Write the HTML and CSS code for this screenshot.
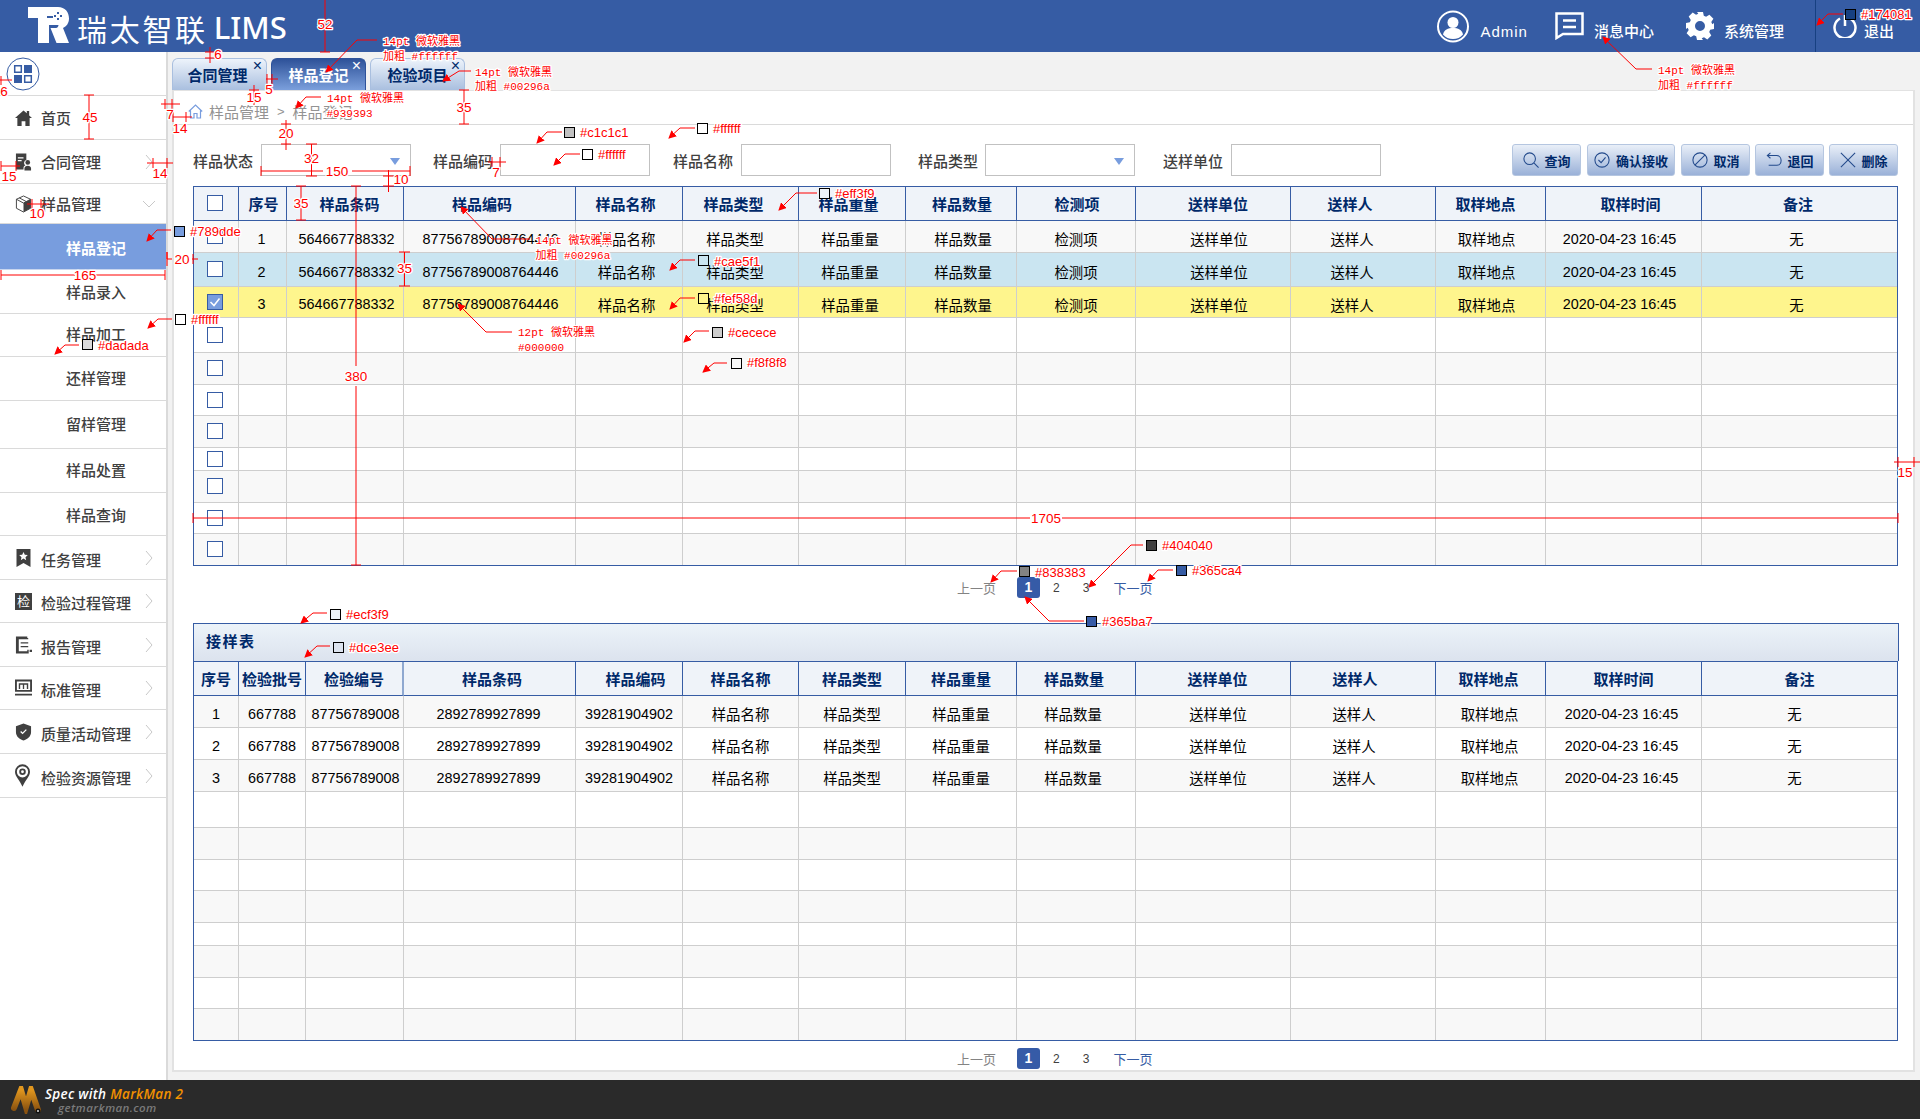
FILE: index.html
```html
<!DOCTYPE html>
<html lang="zh-CN">
<head>
    <meta charset="UTF-8">
    <title>瑞太智联 LIMS</title>
    <link rel="stylesheet" href="styles.css">
</head>
<body>
    <header class="topbar">
        <svg class="logo" viewBox="0 0 41 36">
            <path fill="#fff" d="M0 0H30C37 0 41 5 41 11.500C41 16 38.500 19.500 35 21L41 36H28.500L22.500 21H28C29.500 21 30.500 19.500 30.500 18H21V36H10V11H0Z"/>
            <path fill="#365ca4" d="M25 11H19V9H25ZM29 5h2v2h-2ZM32 8h2v2h-2ZM29 11h2v2h-2ZM26 8h2v2h-2Z"/>
        </svg>
        <span class="brand">瑞太智联</span>
        <span class="brand-lims">LIMS</span>
        <div class="top-right">
            <svg class="top-icon avatar" viewBox="0 0 32 32"><circle cx="16" cy="16" r="15" fill="none" stroke="#fff" stroke-width="2"/><circle cx="16" cy="12" r="5.500" fill="#fff"/><path fill="#fff" d="M6 24c1-5 5-6.500 10-6.500s9 1.500 10 6.500c-2.500 3-6 4.500-10 4.500S8.500 27 6 24Z"/></svg>
            <span class="top-text admin">Admin</span>
            <svg class="top-icon msg" viewBox="0 0 29 28"><path fill="none" stroke="#fff" stroke-width="2.500" d="M1.500 1.500H27.500V22H8L1.500 26Z"/><path stroke="#fff" stroke-width="2.500" d="M8 8.500H21M8 15H21"/></svg>
            <span class="top-text msg-text">消息中心</span>
            <svg class="top-icon gear" viewBox="0 0 28 28"><path fill="#fff" fill-rule="evenodd" d="M11 0h6l.8 3.800 2.300 1 3.300-2.100 4 4-2.100 3.300 1 2.300L28 11v6l-3.800.8-1 2.300 2.100 3.300-4 4-3.300-2.100-2.300 1L17 28h-6l-.8-3.800-2.300-1-3.300 2.100-4-4 2.100-3.300-1-2.300L0 17v-6l3.800-.8 1-2.300-2.100-3.300 4-4 3.300 2.100 2.300-1ZM14 9a5 5 0 1 0 0 10 5 5 0 0 0 0-10Z"/></svg>
            <span class="top-text sys-text">系统管理</span>
            <div class="logout">
                <svg class="top-icon power" viewBox="0 0 24 24"><path fill="none" stroke="#fff" stroke-width="2.500" d="M7 4.500a10.500 10.500 0 1 0 10 0M12 1V12"/></svg>
                <span class="top-text">退出</span>
            </div>
        </div>
    </header>

    <div class="layout">
        <nav class="sidebar">
            <div class="nav-item nav-home h44">
                <svg class="home-grid" viewBox="0 0 34 34">
                    <circle cx="17" cy="17" r="16" fill="none" stroke="#365ca4"/>
                    <path fill="none" stroke="#365ca4" stroke-width="1.500" d="M8.700 8.700h6.600v6.600H8.700Z"/>
                    <path fill="#365ca4" d="M18 8h8v8h-8ZM8 18h8v8H8Z"/>
                    <path fill="none" stroke="#365ca4" stroke-width="1.500" d="M18.700 18.700h6.600v6.600h-6.600Z"/>
                </svg>
            </div>
            <a class="nav-item top-group h44">
                <svg class="nav-icon" viewBox="0 0 18 18"><path d="M9 1 0 9h2.500v8.500h4.500v-5h4v5h4.500V9H18l-3-2.700V1.500h-2.500v2.600Z"/></svg>
                <span class="nav-label">首页</span>
            </a>
            <a class="nav-item top-group h44">
                <svg class="nav-icon" viewBox="0 0 18 18"><path d="M1 0h11v7a3 3 0 0 0-1 5.500c-1 .5-2 1.500-2 3V17H1Z"/><path fill="#fff" d="M3 4h6v1.300H3ZM3 7h4v1.300H3Z"/><circle cx="13.500" cy="9.500" r="2.500"/><path d="M10 18v-2c0-2 1.500-3 3.500-3s3.500 1 3.500 3v2Z"/></svg>
                <span class="nav-label">合同管理</span>
                <svg class="chev" viewBox="0 0 8 16"><polyline points="1,1 7,8 1,15"/></svg>
            </a>
            <a class="nav-item top-group h40">
                <svg class="nav-icon" viewBox="0 0 18 19"><path fill="none" stroke="#404040" d="M9 1 16.500 4.500V14L9 18 1.500 14V4.500Z"/><path fill="none" stroke="#404040" d="M1.500 4.500 9 8.500 16.500 4.500M4.500 3 12 7"/><path d="M9 8.500 16.500 4.500V14L9 18Z"/></svg>
                <span class="nav-label">样品管理</span>
                <svg class="chev-down" viewBox="0 0 14 8"><polyline points="1,1 7,7 13,1"/></svg>
            </a>
            <a class="nav-item sub active h46"><span class="nav-label">样品登记</span></a>
            <a class="nav-item sub mid h44"><span class="nav-label">样品录入</span></a>
            <a class="nav-item sub h43"><span class="nav-label">样品加工</span></a>
            <a class="nav-item sub h44"><span class="nav-label">还样管理</span></a>
            <a class="nav-item sub h48"><span class="nav-label">留样管理</span></a>
            <a class="nav-item sub h44"><span class="nav-label">样品处置</span></a>
            <a class="nav-item sub mid h43"><span class="nav-label">样品查询</span></a>
            <a class="nav-item h44">
                <svg class="nav-icon" viewBox="0 0 16 18"><path fill-rule="evenodd" d="M1 0h14v18l-7-4-7 4ZM8 3 6.700 5.800l-3 .3L6 8.200l-.7 3L8 9.600l2.700 1.600-.7-3 2.300-2.100-3-.3Z"/></svg>
                <span class="nav-label">任务管理</span>
                <svg class="chev" viewBox="0 0 8 16"><polyline points="1,1 7,8 1,15"/></svg>
            </a>
            <a class="nav-item h43">
                <span class="icon-char">检</span>
                <span class="nav-label">检验过程管理</span>
                <svg class="chev" viewBox="0 0 8 16"><polyline points="1,1 7,8 1,15"/></svg>
            </a>
            <a class="nav-item h44">
                <svg class="nav-icon" viewBox="0 0 18 18"><path d="M1 0H13V1.500H14V3H4V15.500H13V14H14.500V18H1Z"/><path d="M6 6h8v1.500H6ZM6 10h8v1.500H6ZM15.500 14H18v2.500h-2.500Z"/></svg>
                <span class="nav-label">报告管理</span>
                <svg class="chev" viewBox="0 0 8 16"><polyline points="1,1 7,8 1,15"/></svg>
            </a>
            <a class="nav-item h43">
                <svg class="nav-icon" viewBox="0 0 18 18"><path fill-rule="evenodd" d="M0 0H18V13H0ZM2 2V11H16V2Z"/><path d="M4 4H14V10H12.500V5.500H9.700V10H8.300V5.500H5.500V10H4ZM0 15H18V17H0Z"/></svg>
                <span class="nav-label">标准管理</span>
                <svg class="chev" viewBox="0 0 8 16"><polyline points="1,1 7,8 1,15"/></svg>
            </a>
            <a class="nav-item h44">
                <svg class="nav-icon" viewBox="0 0 18 18"><path fill-rule="evenodd" d="M9 0 17 3V9C17 14 13 16.500 9 18 5 16.500 1 14 1 9V3ZM5.500 9 8 11.500 12.500 7 11.500 6 8 9.500 6.500 8Z"/></svg>
                <span class="nav-label">质量活动管理</span>
                <svg class="chev" viewBox="0 0 8 16"><polyline points="1,1 7,8 1,15"/></svg>
            </a>
            <a class="nav-item h44">
                <svg class="nav-icon tall" viewBox="0 0 16 24"><path fill-rule="evenodd" d="M8 0a8 8 0 0 1 8 8c0 5-5 9-8 16C5 17 0 13 0 8a8 8 0 0 1 8-8ZM8 2a6 6 0 1 0 0 12A6 6 0 0 0 8 2Z"/><path fill-rule="evenodd" d="M8 4.500a3.500 3.500 0 1 1 0 7 3.500 3.500 0 0 1 0-7ZM8 6.500a1.500 1.500 0 1 0 0 3 1.500 1.500 0 0 0 0-3Z"/></svg>
                <span class="nav-label">检验资源管理</span>
                <svg class="chev" viewBox="0 0 8 16"><polyline points="1,1 7,8 1,15"/></svg>
            </a>
        </nav>

        <main class="main">
            <div class="tabs">
                <div class="tab tab-first">合同管理<span class="tab-x">×</span></div>
                <div class="tab tab-on">样品登记<span class="tab-x">×</span></div>
                <div class="tab">检验项目<span class="tab-x">×</span></div>
            </div>
            <div class="panel">
                <div class="crumb">
                    <svg class="crumb-home" viewBox="0 0 15 15"><path fill="none" stroke="#789dde" stroke-width="1.200" d="M.8 7.500 7.500 1l6.700 6.500M2.500 6.500V14H6V9.500h3V14h3.500V6.500"/></svg>
                    <span>样品管理</span><span class="crumb-sep">&gt;</span><span>样品登记</span>
                </div>

                <div class="filters">
                    <label class="f-label">样品状态</label>
                    <div class="f-box f-select"><i class="caret"></i></div>
                    <label class="f-label gap22">样品编码</label>
                    <div class="f-box"></div>
                    <label class="f-label gap23">样品名称</label>
                    <div class="f-box"></div>
                    <label class="f-label gap27">样品类型</label>
                    <div class="f-box f-select"><i class="caret"></i></div>
                    <label class="f-label gap28">送样单位</label>
                    <div class="f-box"></div>
                    <div class="btns">
                        <button class="btn b69 wide"><svg viewBox="0 0 18 18"><circle cx="7.500" cy="7.500" r="6.500"/><path d="m12.500 12.500 5 5"/></svg>查询</button>
                        <button class="btn b88 wide"><svg viewBox="0 0 18 18"><circle cx="9" cy="9" r="8"/><path d="m5 9 3 3 5-6"/></svg>确认接收</button>
                        <button class="btn b69"><svg viewBox="0 0 18 18"><circle cx="9" cy="9" r="8"/><path d="M3.500 14.500l11-11"/></svg>取消</button>
                        <button class="btn b69"><svg viewBox="0 0 18 18"><path d="M5 1 1.500 4 5 7M1.500 4H12C15 4 17 6.500 17 9.500S15 15 12 15H3"/></svg>退回</button>
                        <button class="btn b69"><svg viewBox="0 0 18 18"><path d="m1 1 16 16M17 1 1 17"/></svg>删除</button>
                    </div>
                </div>

                <table class="grid grid-a">
                    <colgroup>
                        <col class="w45"><col class="w48"><col class="w117"><col class="w172"><col class="w107"><col class="w116"><col class="w107"><col class="w111"><col class="w119"><col class="w155"><col class="w145"><col class="w110"><col class="w156"><col class="w195">
                    </colgroup>
                    <thead>
                        <tr><th><i class="cb"></i></th><th>序号</th><th>样品条码</th><th>样品编码</th><th>样品名称</th><th>样品类型</th><th>样品重量</th><th>样品数量</th><th>检测项</th><th>送样单位</th><th>送样人</th><th>取样地点</th><th>取样时间</th><th>备注</th></tr>
                    </thead>
                    <tbody>
                        <tr class="h32 grey"><td><i class="cb"></i></td><td>1</td><td>564667788332</td><td>87756789008764446</td><td>样品名称</td><td>样品类型</td><td>样品重量</td><td>样品数量</td><td>检测项</td><td>送样单位</td><td>送样人</td><td>取样地点</td><td>2020-04-23 16:45</td><td>无</td></tr>
                        <tr class="h34 blue"><td><i class="cb"></i></td><td>2</td><td>564667788332</td><td>87756789008764446</td><td>样品名称</td><td>样品类型</td><td>样品重量</td><td>样品数量</td><td>检测项</td><td>送样单位</td><td>送样人</td><td>取样地点</td><td>2020-04-23 16:45</td><td>无</td></tr>
                        <tr class="h31 yellow"><td><i class="cb on"><svg viewBox="0 0 14 14"><path d="m2.500 7 3.500 3.500 5.500-7"/></svg></i></td><td>3</td><td>564667788332</td><td>87756789008764446</td><td>样品名称</td><td>样品类型</td><td>样品重量</td><td>样品数量</td><td>检测项</td><td>送样单位</td><td>送样人</td><td>取样地点</td><td>2020-04-23 16:45</td><td>无</td></tr>
                        <tr class="h35"><td><i class="cb"></i></td><td></td><td></td><td></td><td></td><td></td><td></td><td></td><td></td><td></td><td></td><td></td><td></td><td></td></tr>
                        <tr class="h32 grey"><td><i class="cb"></i></td><td></td><td></td><td></td><td></td><td></td><td></td><td></td><td></td><td></td><td></td><td></td><td></td><td></td></tr>
                        <tr class="h31"><td><i class="cb"></i></td><td></td><td></td><td></td><td></td><td></td><td></td><td></td><td></td><td></td><td></td><td></td><td></td><td></td></tr>
                        <tr class="h32 grey"><td><i class="cb"></i></td><td></td><td></td><td></td><td></td><td></td><td></td><td></td><td></td><td></td><td></td><td></td><td></td><td></td></tr>
                        <tr class="h23"><td><i class="cb"></i></td><td></td><td></td><td></td><td></td><td></td><td></td><td></td><td></td><td></td><td></td><td></td><td></td><td></td></tr>
                        <tr class="h32 grey"><td><i class="cb"></i></td><td></td><td></td><td></td><td></td><td></td><td></td><td></td><td></td><td></td><td></td><td></td><td></td><td></td></tr>
                        <tr class="h31"><td><i class="cb"></i></td><td></td><td></td><td></td><td></td><td></td><td></td><td></td><td></td><td></td><td></td><td></td><td></td><td></td></tr>
                        <tr class="h31 grey"><td><i class="cb"></i></td><td></td><td></td><td></td><td></td><td></td><td></td><td></td><td></td><td></td><td></td><td></td><td></td><td></td></tr>
                    </tbody>
                </table>

                <div class="pager pager-a">
                    <span class="pg-prev">上一页</span><span class="pg-on">1</span><span class="pg-num p2">2</span><span class="pg-num p3">3</span><span class="pg-next">下一页</span>
                </div>

                <div class="table-title">接样表</div>
                <table class="grid grid-b">
                    <colgroup>
                        <col class="w45"><col class="w67"><col class="w98"><col class="w172"><col class="w107"><col class="w116"><col class="w107"><col class="w111"><col class="w119"><col class="w155"><col class="w145"><col class="w110"><col class="w156"><col class="w195">
                    </colgroup>
                    <thead>
                        <tr><th>序号</th><th>检验批号</th><th class="th-thick">检验编号</th><th>样品条码</th><th>样品编码</th><th>样品名称</th><th>样品类型</th><th>样品重量</th><th>样品数量</th><th>送样单位</th><th>送样人</th><th>取样地点</th><th>取样时间</th><th>备注</th></tr>
                    </thead>
                    <tbody>
                        <tr class="h32 grey"><td>1</td><td>667788</td><td>87756789008</td><td>2892789927899</td><td>39281904902</td><td>样品名称</td><td>样品类型</td><td>样品重量</td><td>样品数量</td><td>送样单位</td><td>送样人</td><td>取样地点</td><td>2020-04-23 16:45</td><td>无</td></tr>
                        <tr class="h32"><td>2</td><td>667788</td><td>87756789008</td><td>2892789927899</td><td>39281904902</td><td>样品名称</td><td>样品类型</td><td>样品重量</td><td>样品数量</td><td>送样单位</td><td>送样人</td><td>取样地点</td><td>2020-04-23 16:45</td><td>无</td></tr>
                        <tr class="h32 grey"><td>3</td><td>667788</td><td>87756789008</td><td>2892789927899</td><td>39281904902</td><td>样品名称</td><td>样品类型</td><td>样品重量</td><td>样品数量</td><td>送样单位</td><td>送样人</td><td>取样地点</td><td>2020-04-23 16:45</td><td>无</td></tr>
                        <tr class="h36"><td></td><td></td><td></td><td></td><td></td><td></td><td></td><td></td><td></td><td></td><td></td><td></td><td></td><td></td></tr>
                        <tr class="h32 grey"><td></td><td></td><td></td><td></td><td></td><td></td><td></td><td></td><td></td><td></td><td></td><td></td><td></td><td></td></tr>
                        <tr class="h31"><td></td><td></td><td></td><td></td><td></td><td></td><td></td><td></td><td></td><td></td><td></td><td></td><td></td><td></td></tr>
                        <tr class="h32 grey"><td></td><td></td><td></td><td></td><td></td><td></td><td></td><td></td><td></td><td></td><td></td><td></td><td></td><td></td></tr>
                        <tr class="h23"><td></td><td></td><td></td><td></td><td></td><td></td><td></td><td></td><td></td><td></td><td></td><td></td><td></td><td></td></tr>
                        <tr class="h32 grey"><td></td><td></td><td></td><td></td><td></td><td></td><td></td><td></td><td></td><td></td><td></td><td></td><td></td><td></td></tr>
                        <tr class="h31"><td></td><td></td><td></td><td></td><td></td><td></td><td></td><td></td><td></td><td></td><td></td><td></td><td></td><td></td></tr>
                        <tr class="h31 grey"><td></td><td></td><td></td><td></td><td></td><td></td><td></td><td></td><td></td><td></td><td></td><td></td><td></td><td></td></tr>
                    </tbody>
                </table>

                <div class="pager pager-b">
                    <span class="pg-prev">上一页</span><span class="pg-on">1</span><span class="pg-num p2">2</span><span class="pg-num p3">3</span><span class="pg-next">下一页</span>
                </div>
            </div>
        </main>
    </div>

    <footer class="mm-bar">
        <svg class="mm-logo" viewBox="0 0 32 28">
            <defs><linearGradient id="mmg" x1="0" y1="0" x2="0" y2="1"><stop offset="0" stop-color="#e0961e"/><stop offset="1" stop-color="#8a5210"/></linearGradient></defs>
            <path fill="none" stroke="url(#mmg)" stroke-width="6" stroke-linecap="round" d="M3 22 10 4 15 21 20 4 27 24"/>
            <circle cx="27" cy="25" r="2.500" fill="#111"/><circle cx="27" cy="25" r="1" fill="#ddd"/>
        </svg>
        <div class="mm-text">
            <div class="mm-spec">Spec with <b>MarkMan 2</b></div>
            <div class="mm-site">getmarkman.com</div>
        </div>
    </footer>

    <!-- MarkMan annotations: free canvas over the page -->
    <svg class="marks" viewBox="0 0 1920 1119">
        <defs>
            <marker id="ah" markerWidth="8" markerHeight="8" refX="7" refY="4" orient="auto"><path d="M0 0 8 4 0 8Z" fill="#f00"/></marker>
        </defs>

        <!-- measures -->
        <g class="lines">
            <path d="M325 0V52M320 52H330"/>
            <path d="M210 47V63M205 52H215M205 58H215"/>
            <path d="M0 80H12M1 76V85"/>
            <path d="M254 85V105M249 90H259M249 102H259"/>
            <path d="M266 79H278M267 74V84M272 74V84"/>
            <path d="M161 104H180M165 99V109M172 99V109"/>
            <path d="M173 117H192M186 112V122M173 112V122"/>
            <path d="M89 95V139M84 95H94M84 139H94"/>
            <path d="M1 166H20M1 161V171M16 161V171"/>
            <path d="M147 163H173M153 158V168M167 158V168"/>
            <path d="M27 204H49M32 199V209M41 199V209"/>
            <path d="M167 259V252V266M167 259H172M192 259H198M193 254V264"/>
            <path d="M1 270V280M1 275H75M95 275H165M165 270V280"/>
            <path d="M286 120V150M281 124H291M281 144H291"/>
            <path d="M311.500 144V176M306 144H317M306 176H317"/>
            <path d="M261 166V176M261 171H323M352 171H410M410 166V176"/>
            <path d="M388.500 170V192M383 176H394M383 186H394"/>
            <path d="M488 162H506M492 157V167M500 157V167"/>
            <path d="M464 90V124M459 90H469M459 124H469"/>
            <path d="M301 186V220M296 186H306M296 220H306"/>
            <path d="M404.500 252V286M399 252H410M399 286H410"/>
            <path d="M356 186V366M356 386V565M351 186H361M351 565H361"/>
            <path d="M193 518H1030M1062 518H1898M193 513V523M1898 513V523"/>
            <path d="M1894 462H1920M1898 457V467M1914 457V467"/>
        </g>
        <g class="nums">
            <text x="325" y="29">52</text>
            <text x="218" y="59">6</text>
            <text x="4" y="96">6</text>
            <text x="254" y="102">15</text>
            <text x="269" y="94">5</text>
            <text x="170" y="119">7</text>
            <text x="180" y="133">14</text>
            <text x="90" y="122">45</text>
            <text x="9" y="181">15</text>
            <text x="160" y="178">14</text>
            <text x="37" y="218">10</text>
            <text x="182" y="264">20</text>
            <text x="85" y="280">165</text>
            <text x="286" y="138">20</text>
            <text x="311.500" y="163">32</text>
            <text x="337" y="176">150</text>
            <text x="401" y="184">10</text>
            <text x="496" y="177">7</text>
            <text x="464" y="112">35</text>
            <text x="301" y="208">35</text>
            <text x="404.500" y="273">35</text>
            <text x="356" y="381">380</text>
            <text x="1046" y="523">1705</text>
            <text x="1905" y="477">15</text>
        </g>

        <!-- callouts -->
        <g class="leaders">
            <polyline marker-end="url(#ah)" points="377,40 357,40 326,72"/>
            <polyline marker-end="url(#ah)" points="471,71 459,71 443,81"/>
            <polyline marker-end="url(#ah)" points="321,97 306,97 296,108"/>
            <polyline marker-end="url(#ah)" points="562,132 547,132 537,143"/>
            <polyline marker-end="url(#ah)" points="580,154 565,154 554,165"/>
            <polyline marker-end="url(#ah)" points="695,128 680,128 669,138"/>
            <polyline marker-end="url(#ah)" points="171,230 157,230 147,241"/>
            <polyline marker-end="url(#ah)" points="172,319 158,319 148,328"/>
            <polyline marker-end="url(#ah)" points="79,345 65,345 55,354"/>
            <polyline marker-end="url(#ah)" points="530,239 492,239 461,207"/>
            <polyline marker-end="url(#ah)" points="695,260 680,260 670,270"/>
            <polyline marker-end="url(#ah)" points="695,298 680,298 670,309"/>
            <polyline marker-end="url(#ah)" points="709,331 695,331 684,342"/>
            <polyline marker-end="url(#ah)" points="727,363 714,363 703,372"/>
            <polyline marker-end="url(#ah)" points="817,193 796,193 779,210"/>
            <polyline marker-end="url(#ah)" points="512,332 486,332 458,304"/>
            <polyline marker-end="url(#ah)" points="327,613 313,613 301,623"/>
            <polyline marker-end="url(#ah)" points="330,646 317,646 305,657"/>
            <polyline marker-end="url(#ah)" points="1017,571 1001,571 991,582"/>
            <polyline marker-end="url(#ah)" points="1143,545 1131,545 1089,587"/>
            <polyline marker-end="url(#ah)" points="1173,570 1158,570 1148,581"/>
            <polyline marker-end="url(#ah)" points="1084,621 1049,621 1025,597"/>
            <polyline marker-end="url(#ah)" points="1843,14 1828,14 1817,25"/>
            <polyline marker-end="url(#ah)" points="1652,69 1636,69 1603,37"/>
        </g>
        <g class="swatches">
            <rect x="564.500" y="127.500" width="10" height="10" fill="#c1c1c1"/>
            <rect x="582.500" y="149.500" width="10" height="10" fill="#fff"/>
            <rect x="697.500" y="123.500" width="10" height="10" fill="#fff"/>
            <rect x="174.500" y="226.500" width="10" height="10" fill="#789dde"/>
            <rect x="175.500" y="314.500" width="10" height="10" fill="#fff"/>
            <rect x="82.500" y="339.500" width="10" height="10" fill="#dadada"/>
            <rect x="698.500" y="255.500" width="10" height="10" fill="#cae5f1"/>
            <rect x="698.500" y="293.500" width="10" height="10" fill="#fef58d"/>
            <rect x="712.500" y="327.500" width="10" height="10" fill="#cecece"/>
            <rect x="731.500" y="358.500" width="10" height="10" fill="#f8f8f8"/>
            <rect x="819.500" y="188.500" width="10" height="10" fill="#eff3f9"/>
            <rect x="330.500" y="609.500" width="10" height="10" fill="#ecf3f9"/>
            <rect x="333.500" y="642.500" width="10" height="10" fill="#dce3ee"/>
            <rect x="1019.500" y="566.500" width="10" height="10" fill="#838383"/>
            <rect x="1146.500" y="540.500" width="10" height="10" fill="#404040"/>
            <rect x="1176.500" y="565.500" width="10" height="10" fill="#365ca4"/>
            <rect x="1086.500" y="616.500" width="10" height="10" fill="#365ba7"/>
            <rect x="1845.500" y="9.500" width="10" height="10" fill="#174081"/>
        </g>
        <g class="tags">
            <text x="580" y="137">#c1c1c1</text>
            <text x="598" y="159">#ffffff</text>
            <text x="713" y="133">#ffffff</text>
            <text x="190" y="236">#789dde</text>
            <text x="191" y="324">#ffffff</text>
            <text x="98" y="350">#dadada</text>
            <text x="714" y="266">#cae5f1</text>
            <text x="714" y="303">#fef58d</text>
            <text x="728" y="337">#cecece</text>
            <text x="747" y="367">#f8f8f8</text>
            <text x="835" y="198">#eff3f9</text>
            <text x="346" y="619">#ecf3f9</text>
            <text x="349" y="652">#dce3ee</text>
            <text x="1035" y="577">#838383</text>
            <text x="1162" y="550">#404040</text>
            <text x="1192" y="575">#365ca4</text>
            <text x="1102" y="626">#365ba7</text>
            <text x="1861" y="19">#174081</text>
        </g>
        <g class="notes">
            <text x="383" y="45">14pt 微软雅黑</text>
            <text x="383" y="60">加粗 #ffffff</text>
            <text x="475" y="76">14pt 微软雅黑</text>
            <text x="475" y="90">加粗 #00296a</text>
            <text x="327" y="102">14pt 微软雅黑</text>
            <text x="326.500" y="117">#939393</text>
            <text x="535.500" y="244">14pt 微软雅黑</text>
            <text x="535.500" y="259">加粗 #00296a</text>
            <text x="518" y="336">12pt 微软雅黑</text>
            <text x="518" y="351">#000000</text>
            <text x="1658" y="74">14pt 微软雅黑</text>
            <text x="1658" y="89">加粗 #ffffff</text>
        </g>
    </svg>
</body>
</html>
```

FILE: styles.css
```css
* {
    box-sizing: border-box;
}

html, body {
    margin: 0;
    height: 100%;
    overflow: hidden;
}

body {
    position: relative;
    display: flex;
    flex-direction: column;
    background-color: #f2f2f2;
    color: #000;
    font-family: "Liberation Sans", "Noto Sans CJK SC", sans-serif;
}

/* top bar */
.topbar {
    display: flex;
    align-items: center;
    flex: 0 0 52px;
    padding-left: 28px;
    background-color: #365ca4;
    color: #fff;
}

.logo {
    width: 41px;
    height: 36px;
    margin-top: -2px;
}

.brand {
    margin: 3px 0 0 8px;
    font-family: "Noto Sans CJK SC", sans-serif;
    font-size: 30px;
    letter-spacing: 2.700px;
    line-height: 1;
}

.brand-lims {
    margin: 3px 0 0 6px;
    font-family: "Noto Sans", sans-serif;
    font-size: 31px;
    font-weight: 500;
    line-height: 1;
}

.top-right {
    display: flex;
    align-items: center;
    align-self: stretch;
    margin-left: auto;
}

.top-icon {
    display: block;
}

.avatar {
    width: 32px;
    height: 33px;
}

.msg {
    width: 29px;
    height: 28px;
    margin-left: 27px;
}

.gear {
    width: 28px;
    height: 28px;
    margin-left: 32px;
}

.power {
    width: 24px;
    height: 24px;
}

.top-text {
    margin: 10px 0 0 10px;
    font-size: 15px;
    font-weight: 500;
    line-height: 1;
    white-space: nowrap;
}

.admin {
    margin-left: 11px;
    letter-spacing: 1px;
}

.logout {
    display: flex;
    align-items: center;
    align-self: stretch;
    margin-left: 31px;
    padding: 0 26px 0 17px;
    border-left: 1px solid #174081;
}

.logout .top-text {
    margin-left: 7px;
}

/* sidebar + main */
.layout {
    display: flex;
    flex: 1;
    min-height: 0;
}

.sidebar {
    flex: 0 0 168px;
    border-right: 2px solid #dadada;
    background-color: #fff;
}

.nav-item {
    display: flex;
    align-items: center;
    padding-left: 15px;
    border-bottom: 1px solid #dadada;
    color: #404040;
    font-size: 15px;
    font-weight: 500;
}

.h40 { height: 40px; }
.h43 { height: 43px; }
.h44 { height: 44px; }
.h46 { height: 46px; }
.h48 { height: 48px; }

.nav-home {
    padding-left: 6px;
}

.home-grid {
    width: 34px;
    height: 34px;
}

.nav-icon {
    flex: 0 0 17px;
    width: 17px;
    height: 18px;
    fill: #404040;
}

.nav-icon.tall {
    flex: 0 0 15px;
    height: 23px;
    margin-right: 2px;
}

.icon-char {
    flex: 0 0 17px;
    width: 17px;
    height: 17px;
    background-color: #404040;
    color: #fff;
    font-size: 13px;
    font-weight: 400;
    line-height: 17px;
    text-align: center;
}

.nav-label {
    margin: 3px 0 0 9px;
    white-space: nowrap;
}

.top-group .nav-label {
    margin-top: 0;
}

.chev {
    width: 8px;
    height: 16px;
    margin-left: auto;
    margin-right: 13px;
    fill: none;
    stroke: #c8c8c8;
}

.chev-down {
    width: 14px;
    height: 8px;
    margin-left: auto;
    margin-right: 10px;
    fill: none;
    stroke: #c8c8c8;
}

.nav-item.sub {
    padding-left: 66px;
}

.sub .nav-label {
    margin: -3px 0 0;
}

.sub.mid .nav-label {
    margin-top: 0;
}

.nav-item.active {
    border-bottom-color: #c9d6ee;
    background-color: #789dde;
    color: #fff;
    font-weight: 700;
}

.sub.active .nav-label {
    margin-top: 2px;
}

.main {
    display: flex;
    flex: 1;
    flex-direction: column;
    min-width: 0;
    padding: 6px 5px 8px 4px;
}

/* tabs */
.tabs {
    display: flex;
    flex: 0 0 32px;
    gap: 4px;
    height: 32px;
}

.tab {
    position: relative;
    width: 95px;
    height: 32px;
    border: 1px solid #a9bfdf;
    border-bottom: 0;
    border-radius: 6px 6px 0 0;
    background: linear-gradient(#edf3fb, #a9bfdf);
    color: #00296a;
    font-size: 15px;
    font-weight: 700;
    line-height: 34px;
    text-align: center;
}

.tab-first {
    padding-right: 4px;
}

.tab-on {
    border-color: #2e5299;
    background: linear-gradient(#2e5299, #7b9fdc);
    color: #fff;
}

.tab-x {
    position: absolute;
    top: -10px;
    right: 4px;
    font-size: 16px;
    font-weight: 400;
}

.panel {
    flex: 1;
    min-height: 0;
    padding: 0 0 0 19px;
    border: 2px solid #e2e2e2;
    border-top-width: 1px;
    background-color: #fff;
}

.crumb {
    display: flex;
    align-items: center;
    height: 34px;
    margin-left: -19px;
    padding: 8px 0 0 14px;
    border-bottom: 1px solid #dadada;
    color: #939393;
    font-size: 15px;
}

.crumb-home {
    width: 15px;
    height: 15px;
    margin-right: 6px;
}

.crumb-sep {
    margin: 0 8px;
    font-size: 13px;
}

/* filter row */
.filters {
    display: flex;
    align-items: center;
    height: 32px;
    margin-top: 19px;
}

.f-label {
    margin-right: 8px;
    color: #404040;
    font-size: 15px;
    font-weight: 500;
    white-space: nowrap;
}

.gap22 { margin-left: 22px; margin-right: 7px; }
.gap23 { margin-left: 23px; }
.gap27 { margin-left: 27px; margin-right: 7px; }
.gap28 { margin-left: 28px; }

.f-box {
    position: relative;
    flex: 0 0 150px;
    height: 32px;
    border: 1px solid #c1c1c1;
    background-color: #fff;
}

.caret {
    position: absolute;
    top: 13px;
    right: 10px;
    width: 0;
    height: 0;
    border-top: 7px solid #789dde;
    border-left: 5px solid transparent;
    border-right: 5px solid transparent;
}

.btns {
    display: flex;
    gap: 5px;
    margin-left: 131px;
}

.btn {
    display: flex;
    align-items: center;
    justify-content: center;
    gap: 6px;
    height: 32px;
    padding: 0;
    border: 1px solid #b5c6e0;
    border-radius: 3px;
    background: linear-gradient(#e9eff8, #9ab1d8);
    color: #00296a;
    font-family: inherit;
    font-size: 13px;
    font-weight: 700;
}

.btn svg {
    width: 16px;
    height: 16px;
    fill: none;
    stroke: #234a8c;
    stroke-width: 1.200;
}

.b69 { width: 69px; }
.b88 { width: 88px; }

.btn.wide {
    margin-right: 1px;
}

/* tables */
.grid {
    table-layout: fixed;
    width: 1705px;
    border: 1px solid #365ca4;
    border-spacing: 0;
    border-collapse: separate;
    font-size: 14.400px;
}

.grid-a {
    margin-top: 10px;
}

.w45 { width: 45px; }
.w48 { width: 48px; }
.w67 { width: 67px; }
.w98 { width: 98px; }
.w107 { width: 107px; }
.w110 { width: 110px; }
.w111 { width: 111px; }
.w116 { width: 116px; }
.w117 { width: 117px; }
.w119 { width: 119px; }
.w145 { width: 145px; }
.w155 { width: 155px; }
.w156 { width: 156px; }
.w172 { width: 172px; }
.w195 { width: 195px; }

.grid th, .grid td {
    padding: 0;
    text-align: center;
    white-space: nowrap;
    overflow: hidden;
}

.grid th {
    height: 34px;
    border-right: 1px solid #365ca4;
    border-bottom: 1px solid #365ca4;
    background-color: #eff3f9;
    color: #00296a;
    font-size: 15px;
    font-weight: 700;
}

.grid td {
    padding-top: 4px;
    border-right: 1px solid #cecece;
    border-bottom: 1px solid #cecece;
    background-color: #fff;
}

.grid th:last-child, .grid td:last-child {
    border-right: 0;
}

.grid tbody tr:last-child td {
    border-bottom: 0;
}

.grid tr.h23 td { height: 23px; }
.grid tr.h31 td { height: 31px; }
.grid tr.h32 td { height: 32px; }
.grid tr.h34 td { height: 34px; }
.grid tr.h35 td { height: 35px; }
.grid tr.h36 td { height: 36px; }

.grid tr.grey td { background-color: #f8f8f8; }
.grid tr.blue td { background-color: #cae5f1; }
.grid tr.yellow td { background-color: #fef58d; }

.th-thick {
    border-right: 2px solid #8fa8d0 !important;
}

.cb {
    display: block;
    width: 16px;
    height: 16px;
    margin: -1px auto 0;
    border: 1px solid #365ca4;
    background-color: #fff;
}

.cb.on {
    background-color: #789dde;
}

.cb svg {
    display: block;
    width: 14px;
    height: 14px;
    fill: none;
    stroke: #fff;
    stroke-width: 1.500;
}

/* text in these hand-laid grids is not quite centred in its column */
.grid-a td:nth-child(1) { padding: 0 2px 0 0; }
.grid-a th:nth-child(1) { padding-right: 2px; }

.grid-a td:nth-child(2) { padding-right: 2px; }
.grid-a td:nth-child(3) { padding-left: 3px; }
.grid-a td:nth-child(4) { padding-left: 2px; }
.grid-a td:nth-child(5) { padding-right: 5px; }
.grid-a td:nth-child(6) { padding-right: 11px; }
.grid-a td:nth-child(7) { padding-right: 4px; }
.grid-a td:nth-child(8) { padding-left: 4px; }
.grid-a td:nth-child(10) { padding-left: 12px; }
.grid-a td:nth-child(11) { padding-right: 22px; }
.grid-a td:nth-child(12) { padding-right: 8px; }
.grid-a td:nth-child(13) { padding-right: 8px; }
.grid-a td:nth-child(14) { padding-right: 6px; }

.grid-a th:nth-child(2) { padding-left: 2px; }
.grid-a th:nth-child(3) { padding-left: 9px; }
.grid-a th:nth-child(4) { padding-right: 15px; }
.grid-a th:nth-child(5) { padding-right: 7px; }
.grid-a th:nth-child(6) { padding-right: 14px; }
.grid-a th:nth-child(7) { padding-right: 7px; }
.grid-a th:nth-child(8) { padding-left: 2px; }
.grid-a th:nth-child(9) { padding-left: 2px; }
.grid-a th:nth-child(10) { padding-left: 10px; }
.grid-a th:nth-child(11) { padding-right: 26px; }
.grid-a th:nth-child(12) { padding-right: 10px; }
.grid-a th:nth-child(13) { padding-left: 14px; }
.grid-a th:nth-child(14) { padding-right: 3px; }

.grid-b th:nth-child(4) { padding-left: 5px; }
.grid-b th:nth-child(5) { padding-left: 13px; }
.grid-b th:nth-child(9) { padding-right: 4px; }
.grid-b th:nth-child(10) { padding-left: 9px; }
.grid-b th:nth-child(11) { padding-right: 16px; }
.grid-b th:nth-child(12) { padding-right: 4px; }

.grid-b td:nth-child(3) { padding-left: 2px; }
.grid-b td:nth-child(4) { padding-right: 2px; }
.grid-b td:nth-child(9) { padding-right: 6px; }
.grid-b td:nth-child(10) { padding-left: 10px; }
.grid-b td:nth-child(11) { padding-right: 18px; }
.grid-b td:nth-child(12) { padding-right: 2px; }
.grid-b td:nth-child(13) { padding-right: 4px; }
.grid-b td:nth-child(14) { padding-right: 10px; }

/* pagination */
.pager {
    display: flex;
    align-items: center;
    height: 21px;
    padding-left: 764px;
    font-size: 13px;
}

.pager-a {
    margin: 11px 0 25px;
}

.pager-b {
    margin-top: 7px;
}

.pg-prev {
    color: #838383;
}

.pg-on {
    width: 23px;
    height: 21px;
    margin-left: 21px;
    border-radius: 3px;
    background-color: #365ba7;
    color: #fff;
    font-size: 14px;
    font-weight: 700;
    line-height: 21px;
    text-align: center;
}

.pg-num {
    color: #404040;
    font-size: 12px;
}

.p2 { margin-left: 13px; }
.p3 { margin-left: 23px; }

.pg-next {
    margin-left: 24px;
    color: #365ca4;
}

.table-title {
    width: 1706px;
    height: 38px;
    padding-left: 12px;
    border: 1px solid #365ca4;
    border-bottom: 0;
    background: linear-gradient(#ecf3f9, #dce3ee);
    color: #00296a;
    font-size: 15px;
    font-weight: 700;
    letter-spacing: 1.500px;
    line-height: 36px;
}

/* MarkMan strip */
.mm-bar {
    display: flex;
    align-items: center;
    flex: 0 0 39px;
    padding-left: 11px;
    background-color: #2a2a2a;
}

.mm-logo {
    width: 32px;
    height: 28px;
}

.mm-text {
    margin: 3px 0 0 2px;
    font-family: "Open Sans", sans-serif;
    font-style: italic;
    line-height: 13px;
}

.mm-spec {
    color: #fff;
    font-size: 13.500px;
    font-weight: 600;
    letter-spacing: .3px;
}

.mm-spec b {
    color: #f29100;
    font-weight: 600;
}

.mm-site {
    margin-left: 13px;
    color: #7a7a7a;
    font-size: 11.500px;
    font-weight: 600;
    letter-spacing: .4px;
}

/* annotation layer */
.marks {
    position: absolute;
    top: 0;
    left: 0;
    width: 1920px;
    height: 1119px;
    pointer-events: none;
}

.lines path, .leaders polyline {
    fill: none;
    stroke: #f00;
    stroke-width: 1;
}

.swatches rect {
    stroke: #000;
    stroke-width: 1;
}

.nums text, .tags text, .notes text {
    fill: #f00;
    stroke: #fff;
    stroke-width: 2.500px;
    stroke-linejoin: round;
    paint-order: stroke;
    font-family: "Liberation Sans", "Noto Sans CJK SC", sans-serif;
}

.nums text {
    font-size: 13.500px;
    text-anchor: middle;
}

.tags text {
    font-size: 13px;
}

.notes text {
    font-family: "Liberation Mono", "Noto Sans CJK SC", monospace;
    font-size: 11px;
}
```
